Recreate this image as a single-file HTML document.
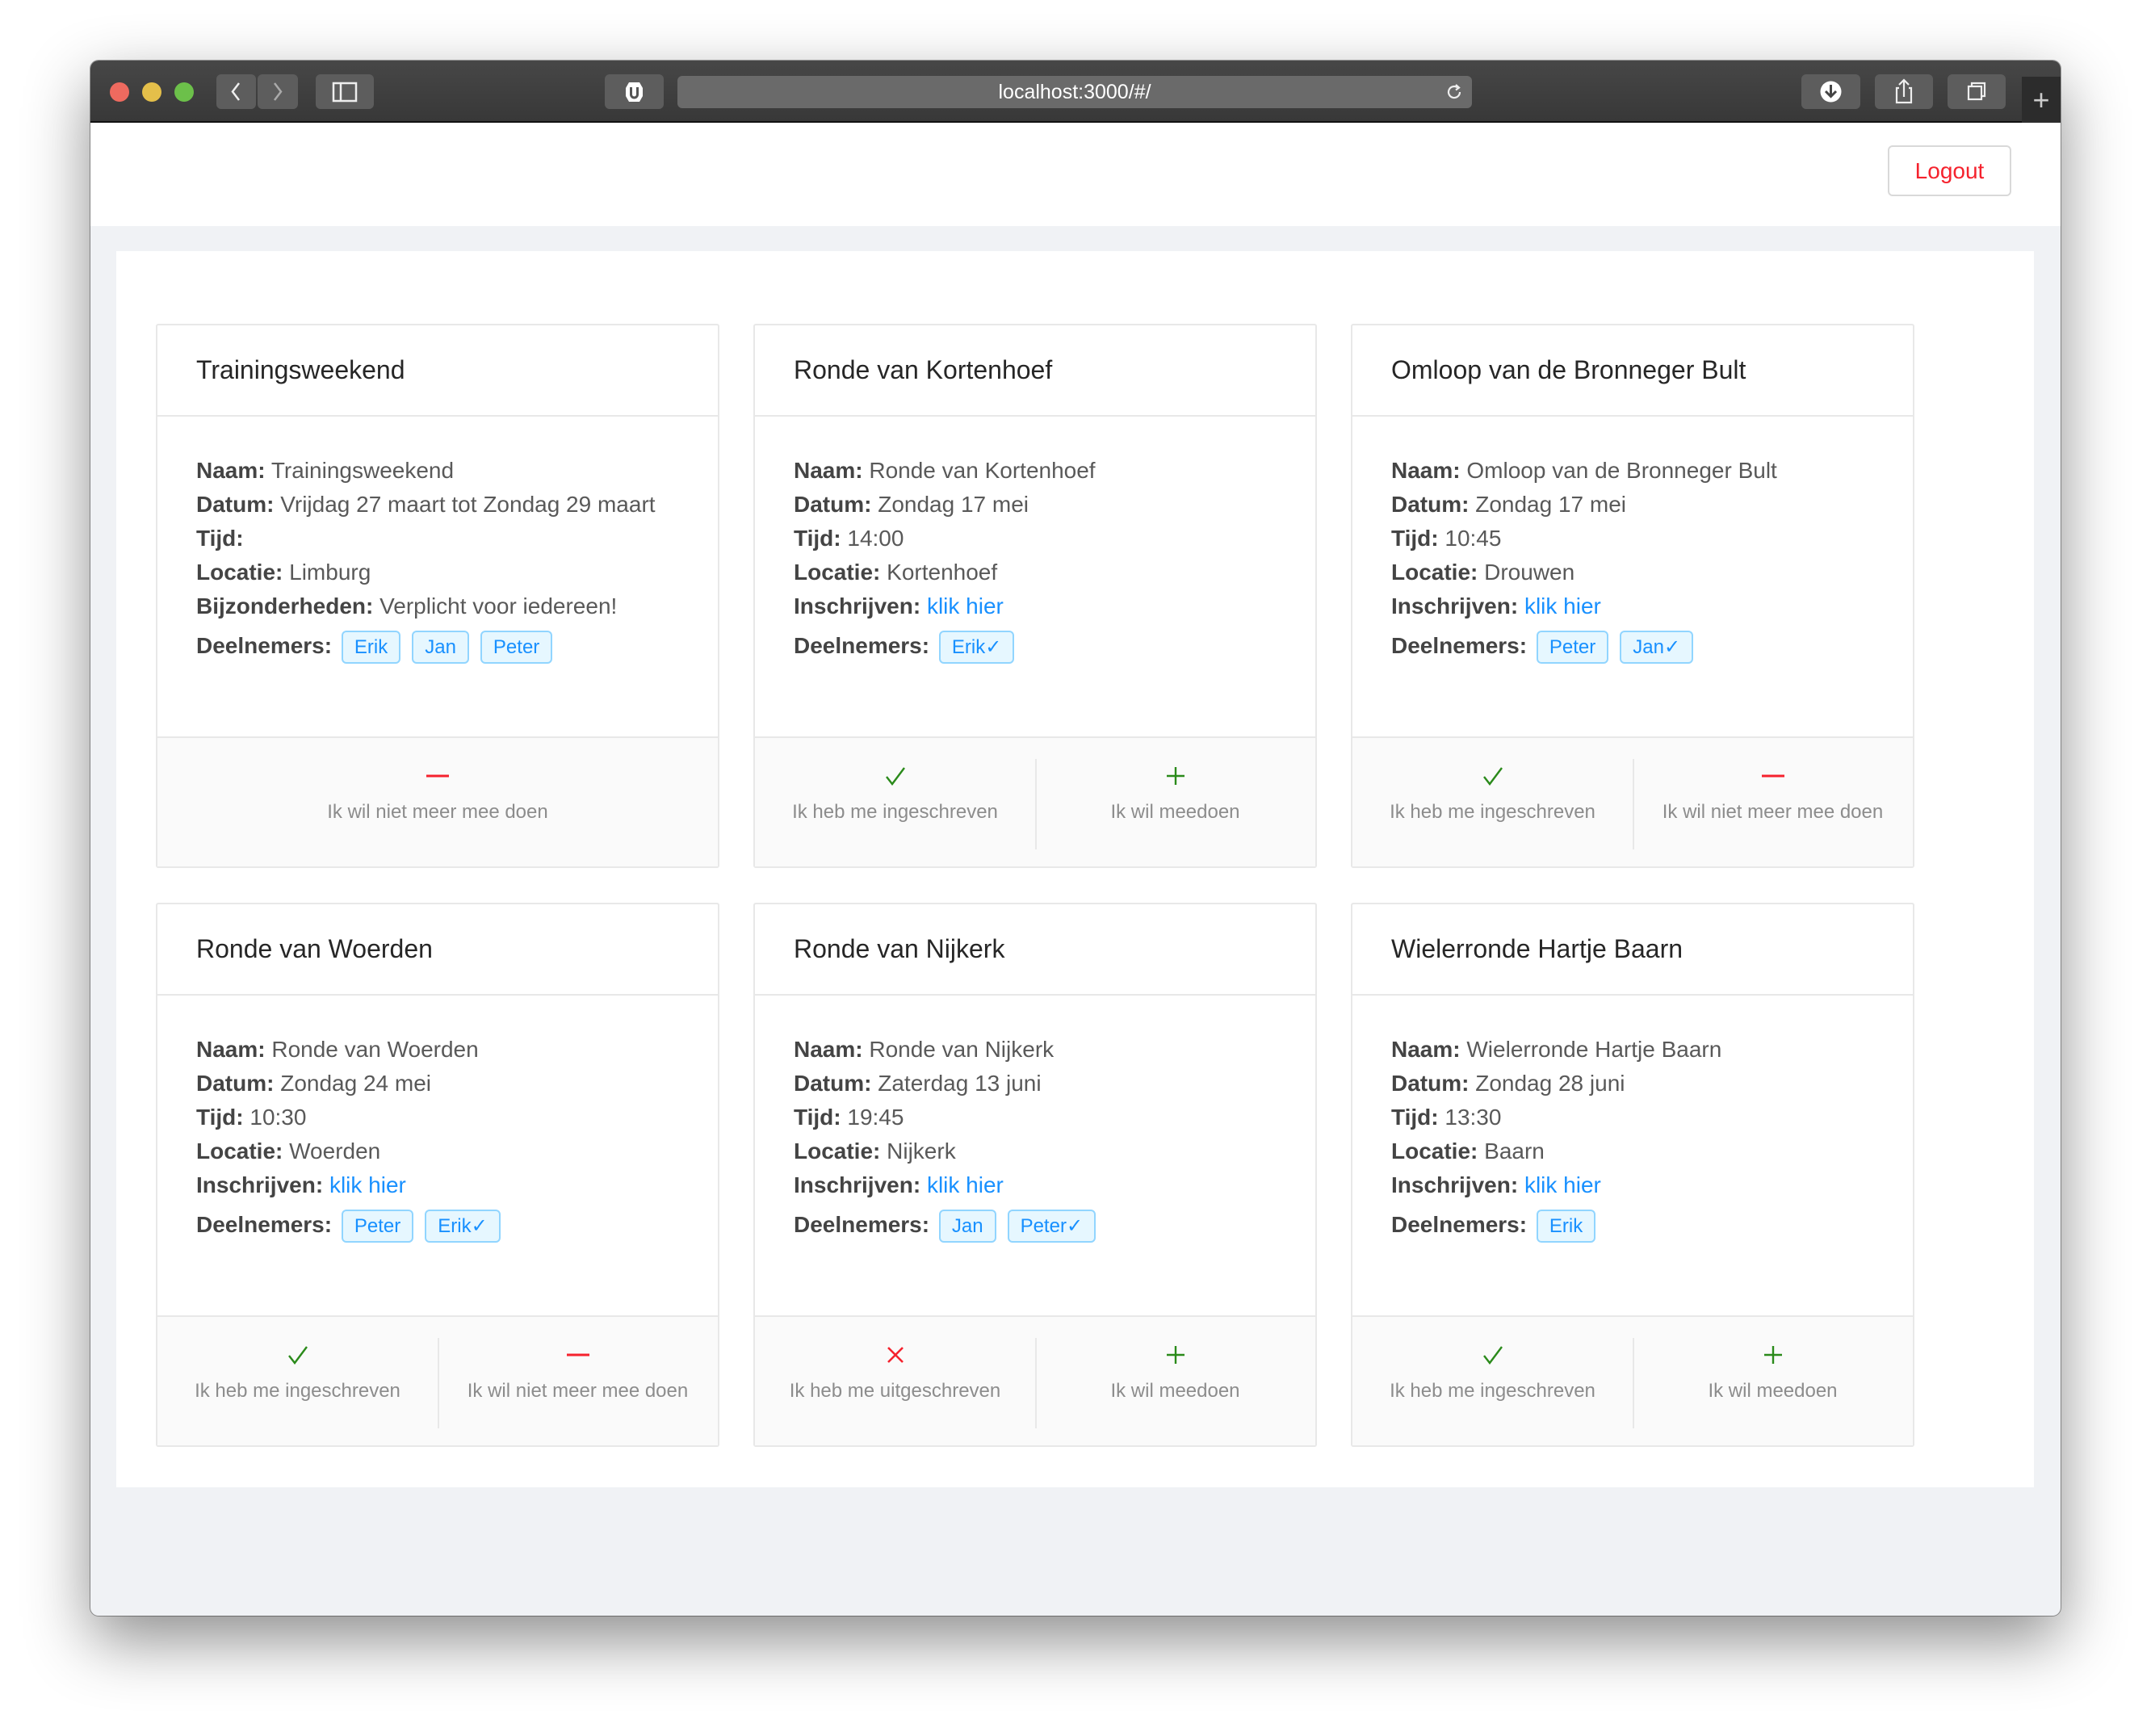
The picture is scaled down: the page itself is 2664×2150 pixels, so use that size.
<!DOCTYPE html>
<html><head><meta charset="utf-8"><style>
*{box-sizing:border-box;margin:0;padding:0}
body{width:2664px;height:2150px;background:#fff;font-family:"Liberation Sans",sans-serif;position:relative;overflow:hidden}
.win{position:absolute;left:112px;top:75px;width:2440px;height:1926px;background:#f0f2f5;border-radius:10px;overflow:hidden;box-shadow:0 30px 80px rgba(0,0,0,.45),0 0 0 1px rgba(0,0,0,.35)}
.tb{position:absolute;left:0;top:0;width:100%;height:77px;background:linear-gradient(#474747,#383838);border-bottom:2px solid #111}
.dot{position:absolute;top:27px;width:24px;height:24px;border-radius:50%}
.btn{position:absolute;top:17px;height:43px;background:#5d5d5d;border-radius:6px}
.url{position:absolute;left:727px;top:19px;width:984px;height:40px;background:#6a6a6a;border-radius:6px;color:#fff;font-size:25px;text-align:center;line-height:40px}
.hdr{position:absolute;left:0;top:77px;width:100%;height:128px;background:#fff}
.logout{position:absolute;left:2226px;top:28px;width:153px;height:63px;border:2px solid #d9d9d9;border-radius:6px;color:#f5222d;font-size:28px;text-align:center;line-height:59px;background:#fff}
.content{position:absolute;left:32px;top:236px;width:2375px;height:1531px;background:#fff}
.card{position:absolute;width:698px;height:674px;border:2px solid #e8e8e8;border-radius:3px;background:#fff}
.ch{height:113px;border-bottom:2px solid #e8e8e8;padding-left:48px;font-size:32px;color:#262626;line-height:111px}
.cb{padding:46px 48px 0;font-size:28px;line-height:42px;color:#595959}
.cb b{color:#444}
.cb a{color:#1890ff;text-decoration:none}
.tag{display:inline-block;height:41px;line-height:37px;padding:0 14px;margin-left:4px;margin-right:10px;font-size:24px;color:#1890ff;background:#e6f7ff;border:2px solid #91d5ff;border-radius:6px;vertical-align:middle}
.dl{margin-top:4px;line-height:48px}
.cf{position:absolute;left:0;bottom:0;width:100%;height:161px;background:#fafafa;border-top:2px solid #e8e8e8;display:flex}
.act{flex:1;text-align:center;position:relative;color:#8c8c8c;font-size:24px}
.act+.act:before{content:"";position:absolute;left:0;top:26px;height:112px;border-left:2px solid #e8e8e8}
.ic{height:42px;margin-top:26px}
.ic svg{display:block;margin:0 auto}
.tx{margin-top:10px}
</style></head><body>
<div class="win">
<div class="tb">
<div class="dot" style="left:24px;background:#ee6a5f"></div>
<div class="dot" style="left:64px;background:#e4bf4a"></div>
<div class="dot" style="left:104px;background:#6cc04a"></div>
<div class="btn" style="left:156px;width:49px"><svg width="49" height="43"><path d="M28 11 L20 21.5 L28 32" stroke="#eee" stroke-width="2.5" fill="none"/></svg></div>
<div class="btn" style="left:207px;width:50px"><svg width="50" height="43"><path d="M21 11 L29 21.5 L21 32" stroke="#aaa" stroke-width="2.5" fill="none"/></svg></div>
<div class="btn" style="left:279px;width:72px"><svg width="72" height="43"><rect x="22" y="11" width="28" height="22" stroke="#eee" stroke-width="2.5" fill="none"/><line x1="31" y1="11" x2="31" y2="33" stroke="#eee" stroke-width="2.5"/></svg></div>
<div class="btn" style="left:637px;width:73px"><svg width="73" height="43"><polygon points="30,10 43,10 47,17 47,27 43,34 30,34 26,27 26,17" fill="#fff"/><path d="M32.5 16 v9 a4 4 0 0 0 8 0 v-9" stroke="#555" stroke-width="3" fill="none"/></svg></div>
<div class="url">localhost:3000/#/<svg style="position:absolute;right:10px;top:8px" width="24" height="24"><path d="M19 12 a7 7 0 1 1 -3 -5.7" stroke="#eee" stroke-width="2.2" fill="none"/><path d="M14 3 L18 6.5 L14 9.5" stroke="#eee" stroke-width="2.2" fill="none"/></svg></div>
<div class="btn" style="left:2119px;width:73px"><svg width="73" height="43"><circle cx="36.5" cy="21.5" r="13" fill="#fff"/><path d="M36.5 13 v14 M30 21 l6.5 6.5 l6.5 -6.5" stroke="#444" stroke-width="3" fill="none"/></svg></div>
<div class="btn" style="left:2210px;width:72px"><svg width="72" height="43"><path d="M30 17 h-3 v18 h18 v-18 h-3 M36 28 v-20 M30 13 l6 -6 l6 6" stroke="#eee" stroke-width="2.2" fill="none"/></svg></div>
<div class="btn" style="left:2300px;width:72px"><svg width="72" height="43"><rect x="26" y="15" width="16" height="16" stroke="#eee" stroke-width="2.2" fill="none"/><path d="M30 15 v-4 h16 v16 h-4" stroke="#eee" stroke-width="2.2" fill="none"/></svg></div>
<div style="position:absolute;left:2392px;top:20px;width:48px;height:57px;background:#2c2c2c;color:#ccc;font-size:36px;text-align:center;line-height:57px">+</div>
</div>
<div class="hdr"><div class="logout">Logout</div></div>
<div class="content"></div>
</div>

<svg width="0" height="0" style="position:absolute">
<defs>
<symbol id="chk" viewBox="0 0 28 28"><path d="M3 15 L10 24 L25 4" stroke="#2a8a1a" stroke-width="2.4" fill="none"/></symbol>
<symbol id="pls" viewBox="0 0 28 28"><path d="M14 3 V25 M3 14 H25" stroke="#2a8a1a" stroke-width="2.4" fill="none"/></symbol>
<symbol id="mns" viewBox="0 0 28 28"><path d="M0 14 H28" stroke="#f5222d" stroke-width="3" fill="none"/></symbol>
<symbol id="xx" viewBox="0 0 28 28"><path d="M5 5 L23 23 M23 5 L5 23" stroke="#f5222d" stroke-width="2.6" fill="none"/></symbol>
</defs></svg>

<div class="card" style="left:193px;top:401px"><div class="ch">Trainingsweekend</div><div class="cb">
<div><b>Naam:</b> Trainingsweekend</div><div><b>Datum:</b> Vrijdag 27 maart tot Zondag 29 maart</div><div><b>Tijd:</b></div><div><b>Locatie:</b> Limburg</div><div><b>Bijzonderheden:</b> Verplicht voor iedereen!</div>
<div class="dl"><b>Deelnemers:</b> <span class="tag">Erik</span><span class="tag">Jan</span><span class="tag">Peter</span></div></div>
<div class="cf"><div class="act"><div class="ic"><svg width="28" height="42"><use href="#mns" y="7" width="28" height="28"/></svg></div><div class="tx">Ik wil niet meer mee doen</div></div></div></div>

<div class="card" style="left:933px;top:401px"><div class="ch">Ronde van Kortenhoef</div><div class="cb">
<div><b>Naam:</b> Ronde van Kortenhoef</div><div><b>Datum:</b> Zondag 17 mei</div><div><b>Tijd:</b> 14:00</div><div><b>Locatie:</b> Kortenhoef</div><div><b>Inschrijven:</b> <a>klik hier</a></div>
<div class="dl"><b>Deelnemers:</b> <span class="tag">Erik✓</span></div></div>
<div class="cf"><div class="act"><div class="ic"><svg width="28" height="42"><use href="#chk" y="7" width="28" height="28"/></svg></div><div class="tx">Ik heb me ingeschreven</div></div><div class="act"><div class="ic"><svg width="28" height="42"><use href="#pls" y="7" width="28" height="28"/></svg></div><div class="tx">Ik wil meedoen</div></div></div></div>

<div class="card" style="left:1673px;top:401px"><div class="ch">Omloop van de Bronneger Bult</div><div class="cb">
<div><b>Naam:</b> Omloop van de Bronneger Bult</div><div><b>Datum:</b> Zondag 17 mei</div><div><b>Tijd:</b> 10:45</div><div><b>Locatie:</b> Drouwen</div><div><b>Inschrijven:</b> <a>klik hier</a></div>
<div class="dl"><b>Deelnemers:</b> <span class="tag">Peter</span><span class="tag">Jan✓</span></div></div>
<div class="cf"><div class="act"><div class="ic"><svg width="28" height="42"><use href="#chk" y="7" width="28" height="28"/></svg></div><div class="tx">Ik heb me ingeschreven</div></div><div class="act"><div class="ic"><svg width="28" height="42"><use href="#mns" y="7" width="28" height="28"/></svg></div><div class="tx">Ik wil niet meer mee doen</div></div></div></div>

<div class="card" style="left:193px;top:1118px"><div class="ch">Ronde van Woerden</div><div class="cb">
<div><b>Naam:</b> Ronde van Woerden</div><div><b>Datum:</b> Zondag 24 mei</div><div><b>Tijd:</b> 10:30</div><div><b>Locatie:</b> Woerden</div><div><b>Inschrijven:</b> <a>klik hier</a></div>
<div class="dl"><b>Deelnemers:</b> <span class="tag">Peter</span><span class="tag">Erik✓</span></div></div>
<div class="cf"><div class="act"><div class="ic"><svg width="28" height="42"><use href="#chk" y="7" width="28" height="28"/></svg></div><div class="tx">Ik heb me ingeschreven</div></div><div class="act"><div class="ic"><svg width="28" height="42"><use href="#mns" y="7" width="28" height="28"/></svg></div><div class="tx">Ik wil niet meer mee doen</div></div></div></div>

<div class="card" style="left:933px;top:1118px"><div class="ch">Ronde van Nijkerk</div><div class="cb">
<div><b>Naam:</b> Ronde van Nijkerk</div><div><b>Datum:</b> Zaterdag 13 juni</div><div><b>Tijd:</b> 19:45</div><div><b>Locatie:</b> Nijkerk</div><div><b>Inschrijven:</b> <a>klik hier</a></div>
<div class="dl"><b>Deelnemers:</b> <span class="tag">Jan</span><span class="tag">Peter✓</span></div></div>
<div class="cf"><div class="act"><div class="ic"><svg width="28" height="42"><use href="#xx" y="7" width="28" height="28"/></svg></div><div class="tx">Ik heb me uitgeschreven</div></div><div class="act"><div class="ic"><svg width="28" height="42"><use href="#pls" y="7" width="28" height="28"/></svg></div><div class="tx">Ik wil meedoen</div></div></div></div>

<div class="card" style="left:1673px;top:1118px"><div class="ch">Wielerronde Hartje Baarn</div><div class="cb">
<div><b>Naam:</b> Wielerronde Hartje Baarn</div><div><b>Datum:</b> Zondag 28 juni</div><div><b>Tijd:</b> 13:30</div><div><b>Locatie:</b> Baarn</div><div><b>Inschrijven:</b> <a>klik hier</a></div>
<div class="dl"><b>Deelnemers:</b> <span class="tag">Erik</span></div></div>
<div class="cf"><div class="act"><div class="ic"><svg width="28" height="42"><use href="#chk" y="7" width="28" height="28"/></svg></div><div class="tx">Ik heb me ingeschreven</div></div><div class="act"><div class="ic"><svg width="28" height="42"><use href="#pls" y="7" width="28" height="28"/></svg></div><div class="tx">Ik wil meedoen</div></div></div></div>
</body></html>
